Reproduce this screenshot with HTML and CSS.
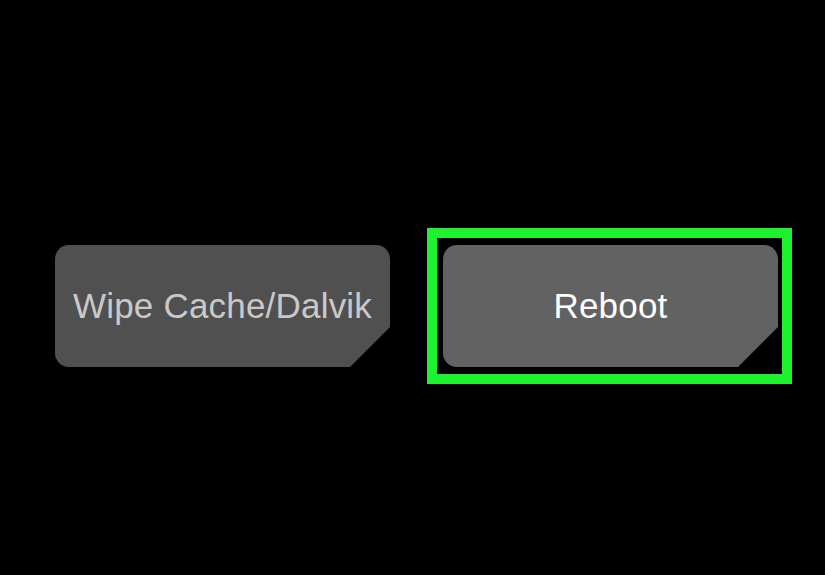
FILE: index.html
```html
<!DOCTYPE html>
<html>
<head>
<meta charset="utf-8">
<link rel="stylesheet" href="styles.css">
</head>
<body>
<div class="row">
  <div class="btn btn-wipe">Wipe Cache/Dalvik</div>
  <div class="focus">
    <div class="btn btn-reboot">Reboot</div>
  </div>
</div>
</body>
</html>
```
FILE: styles.css
```css
html, body {
  margin: 0;
  padding: 0;
  background: #000;
  width: 825px;
  height: 575px;
  overflow: hidden;
}
.row {
  display: flex;
  align-items: center;
  gap: 37px;
  padding: 228px 0 0 55px;
}
.btn {
  width: 335px;
  height: 122px;
  display: flex;
  align-items: center;
  justify-content: center;
  border-radius: 14px;
  font-family: "Liberation Sans", Arial, sans-serif;
  font-size: 35px;
  letter-spacing: 0.2px;
  clip-path: polygon(0 0, 100% 0, 100% calc(100% - 40px), calc(100% - 40px) 100%, 0 100%);
}
.btn-wipe {
  background: #505050;
  color: #c9c9c9;
}
.btn-reboot {
  background: #626262;
  color: #ffffff;
}
.focus {
  border: 10px solid #1ef12e;
  padding: 7px 4px 7px 6px;
}
```
